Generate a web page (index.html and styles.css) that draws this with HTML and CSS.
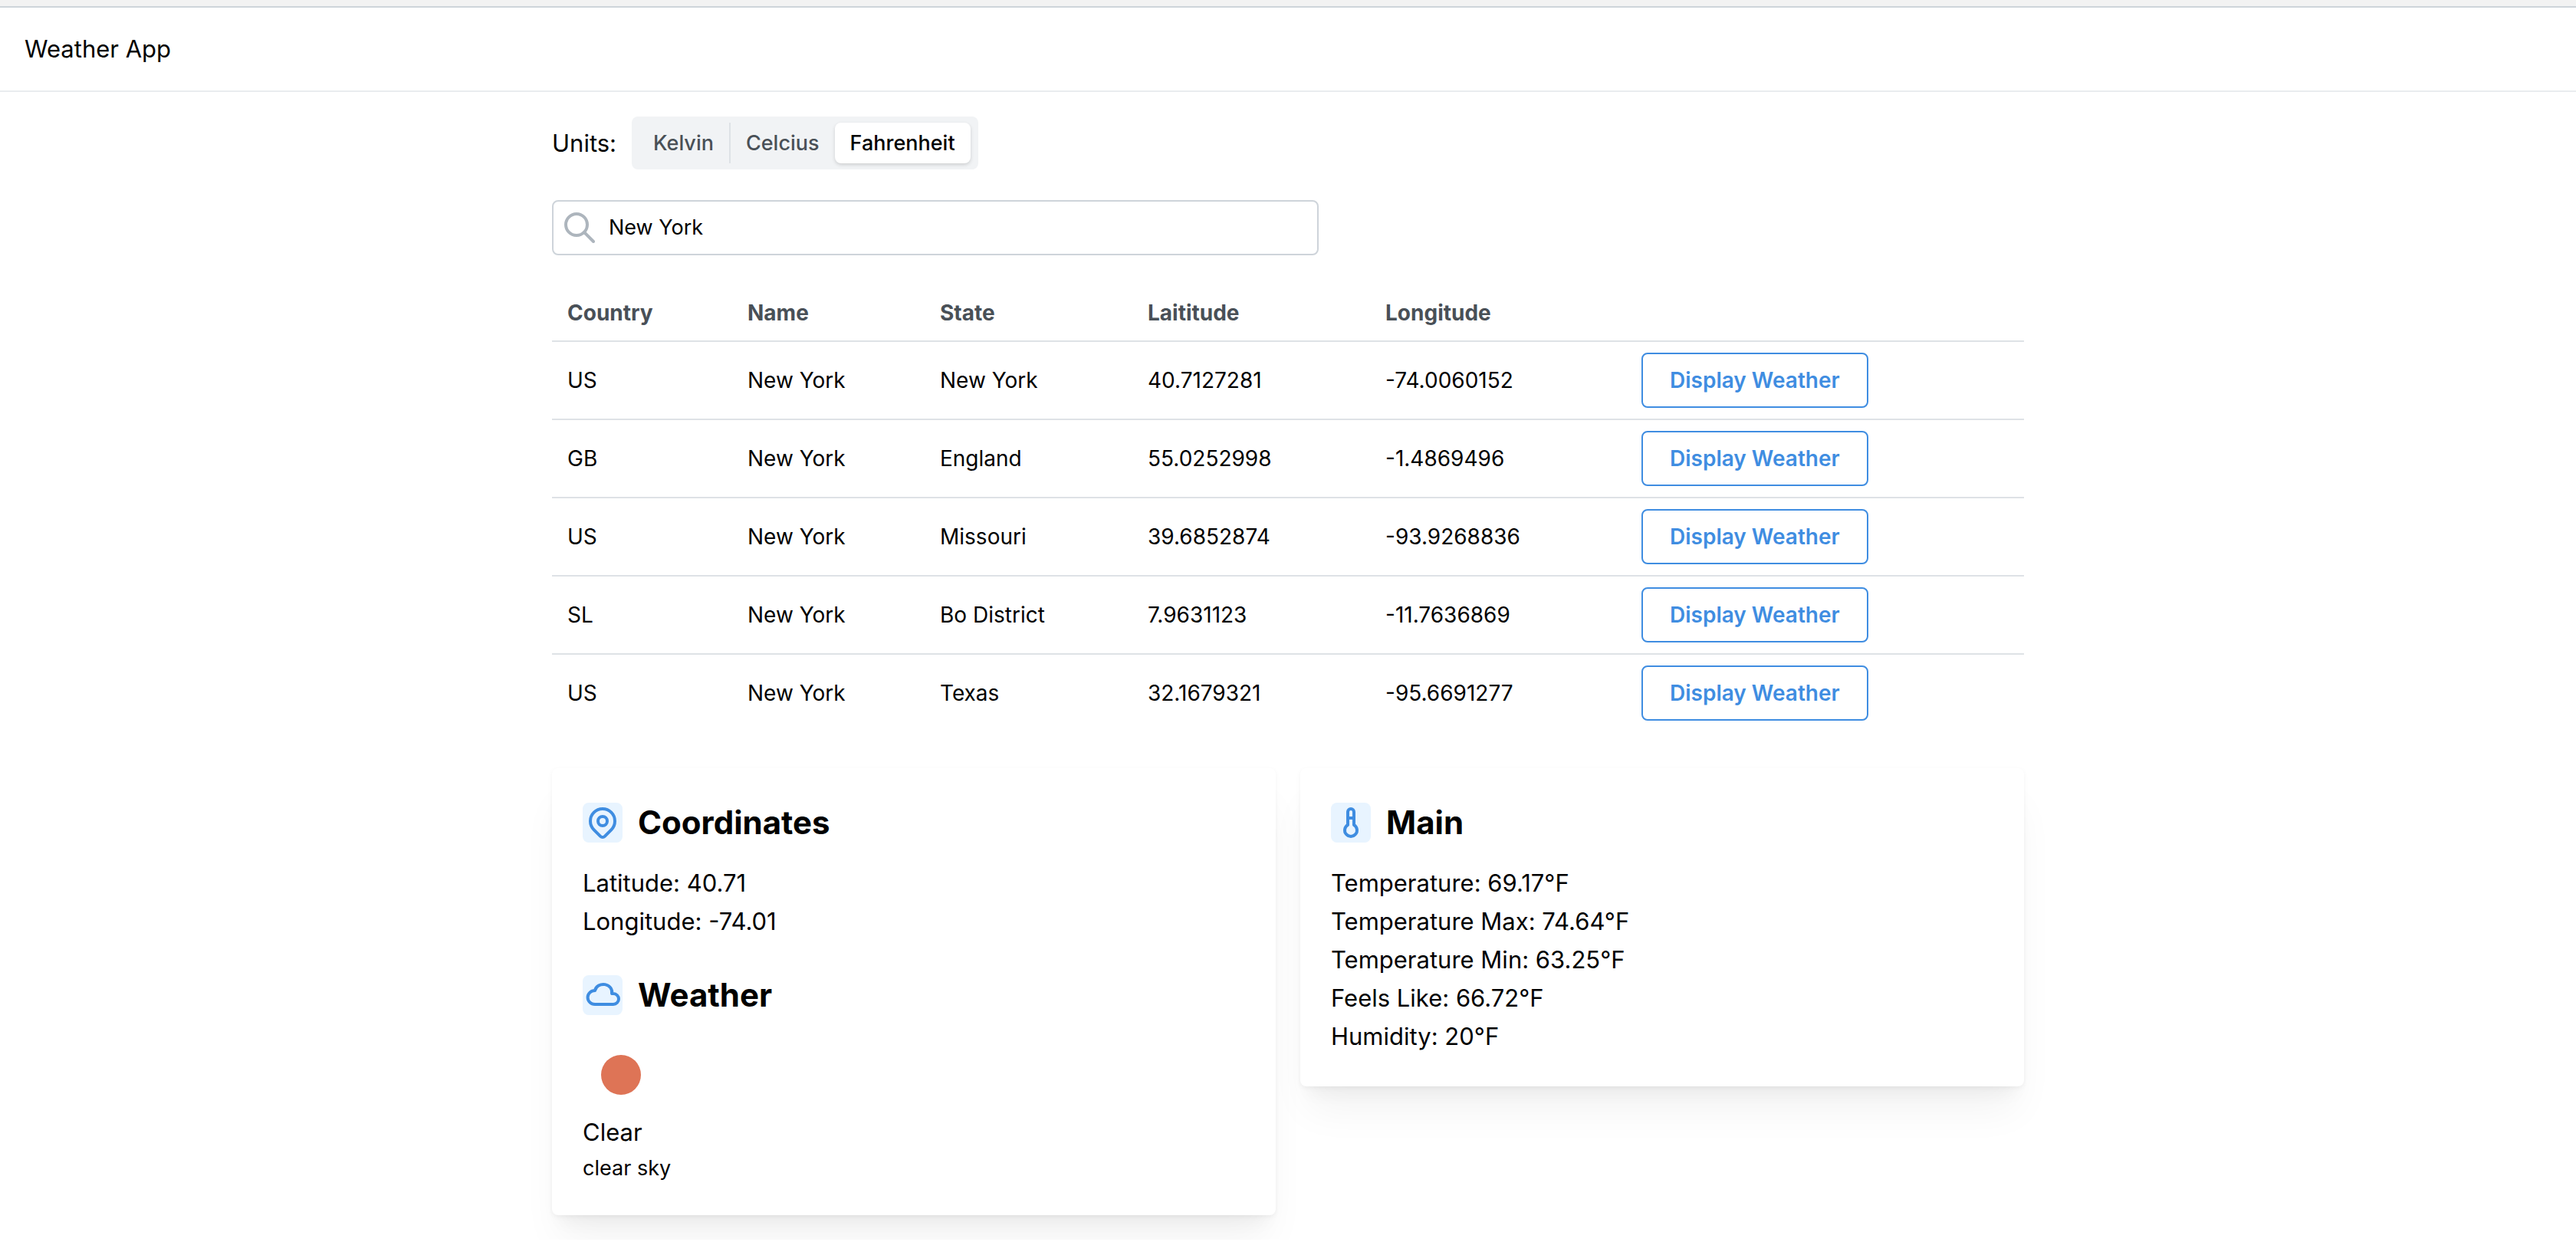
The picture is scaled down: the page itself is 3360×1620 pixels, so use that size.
FILE: index.html
```html
<!DOCTYPE html>
<html lang="en">
<head>
  <meta charset="utf-8">
  <meta name="viewport" content="width=device-width, initial-scale=1">
  <title>Weather App</title>
  <link rel="stylesheet" href="styles.css">
</head>
<body>
  <header class="header">Weather App</header>

  <main class="container">
    <fieldset class="units">
      <legend class="visually-hidden">Units</legend>
      <span>Units:</span>
      <div class="segmented">
        <div class="segment">
          <input class="segment-input" type="radio" name="units" id="kelvin">
          <label class="segment-label" for="kelvin">Kelvin</label>
        </div>
        <div class="segment">
          <input class="segment-input" type="radio" name="units" id="celcius">
          <label class="segment-label" for="celcius">Celcius</label>
        </div>
        <div class="segment">
          <input class="segment-input" type="radio" name="units" id="fahrenheit" checked>
          <label class="segment-label" for="fahrenheit">Fahrenheit</label>
        </div>
      </div>
    </fieldset>

    <div class="search">
      <svg class="search-icon" viewBox="0 0 40 40" aria-hidden="true">
        <circle cx="16" cy="16" r="14"/>
        <path d="M26 26l12 12"/>
      </svg>
      <input class="search-input" type="text" value="New York" aria-label="City">
    </div>

    <table class="table">
      <colgroup>
        <col class="col-country">
        <col class="col-name">
        <col class="col-state">
        <col class="col-latitude">
        <col class="col-longitude">
        <col>
      </colgroup>
      <thead>
        <tr><th>Country</th><th>Name</th><th>State</th><th>Laititude</th><th>Longitude</th><th></th></tr>
      </thead>
      <tbody>
        <tr><td>US</td><td>New York</td><td>New York</td><td>40.7127281</td><td>-74.0060152</td><td><button class="button" type="button">Display Weather</button></td></tr>
        <tr><td>GB</td><td>New York</td><td>England</td><td>55.0252998</td><td>-1.4869496</td><td><button class="button" type="button">Display Weather</button></td></tr>
        <tr><td>US</td><td>New York</td><td>Missouri</td><td>39.6852874</td><td>-93.9268836</td><td><button class="button" type="button">Display Weather</button></td></tr>
        <tr><td>SL</td><td>New York</td><td>Bo District</td><td>7.9631123</td><td>-11.7636869</td><td><button class="button" type="button">Display Weather</button></td></tr>
        <tr><td>US</td><td>New York</td><td>Texas</td><td>32.1679321</td><td>-95.6691277</td><td><button class="button" type="button">Display Weather</button></td></tr>
      </tbody>
    </table>

    <div class="cards">
      <section class="card">
        <div class="block">
          <h2 class="title">
            <span class="theme-icon">
              <svg viewBox="0 0 24 24" aria-hidden="true">
                <circle cx="12" cy="11" r="3"/>
                <path d="M17.657 16.657L13.414 20.9a2 2 0 0 1-2.827 0l-4.244-4.243a8 8 0 1 1 11.314 0z"/>
              </svg>
            </span>
            Coordinates
          </h2>
          <p class="line">Latitude: 40.71</p>
          <p class="line">Longitude: -74.01</p>
        </div>
        <div class="block">
          <h2 class="title">
            <span class="theme-icon">
              <svg viewBox="0 0 24 24" aria-hidden="true">
                <path d="M7 18a4.600 4.400 0 0 1 0-9 5 4.500 0 0 1 11 2h1a3.500 3.500 0 0 1 0 7H7"/>
              </svg>
            </span>
            Weather
          </h2>
          <svg class="condition" viewBox="0 0 100 100" role="img" aria-label="Clear">
            <circle cx="50" cy="50" r="26"/>
          </svg>
          <p class="line">Clear</p>
          <p class="line-small">clear sky</p>
        </div>
      </section>

      <section class="card">
        <div class="block">
          <h2 class="title">
            <span class="theme-icon">
              <svg viewBox="0 0 24 24" aria-hidden="true">
                <path d="M10 13.500a4 4 0 1 0 4 0V5a2 2 0 0 0-4 0v8.500"/>
                <path d="M10 9h4"/>
              </svg>
            </span>
            Main
          </h2>
          <p class="line">Temperature: 69.17°F</p>
          <p class="line">Temperature Max: 74.64°F</p>
          <p class="line">Temperature Min: 63.25°F</p>
          <p class="line">Feels Like: 66.72°F</p>
          <p class="line">Humidity: 20°F</p>
        </div>
      </section>
    </div>
  </main>
</body>
</html>
```

FILE: styles.css
```css
:root {
  --blue: #3f8de1;
  --blue-light: #e8f4ff;
  --gray-1: #f1f3f5;
  --gray-3: #dee2e6;
  --gray-4: #ced4da;
  --gray-5: #adb5bd;
  --gray-7: #495057;
}

* {
  box-sizing: border-box;
}

body {
  margin: 0;
  border-top: 8px solid #f2f2f2;
  background: #fff;
  color: #000;
  font-family: Inter, "Liberation Sans", sans-serif;
  font-size: 31px;
  line-height: 50px;
}

.visually-hidden,
.segment-input {
  position: absolute;
  width: 1px;
  height: 1px;
  margin: 0;
  overflow: hidden;
  opacity: 0;
}

.header {
  padding: 29px 32px;
  border-top: 2px solid var(--gray-4);
  border-bottom: 2px solid #e9ecef;
}

.container {
  max-width: 1920px;
  margin: 0 auto;
  padding: 32px 0;
}

/* Unit switch */

.units {
  display: flex;
  align-items: center;
  gap: 20px;
  margin: 0 0 40px;
  padding: 0;
  border: 0;
}

.segmented {
  display: flex;
  padding: 8px 10px 8px 8px;
  border-radius: 8px;
  background: var(--gray-1);
}

.segment {
  position: relative;
}

.segment:nth-child(2) {
  border-left: 2px solid var(--gray-3);
}

.segment-label {
  display: block;
  padding: 0 20px;
  border-radius: 8px;
  color: var(--gray-7);
  font-size: 27px;
  font-weight: 500;
  line-height: 53px;
  cursor: pointer;
}

.segment-input:checked + .segment-label {
  background: #fff;
  color: #000;
  box-shadow: 0 2px 6px rgba(0, 0, 0, .05), 0 2px 4px rgba(0, 0, 0, .1);
}

/* Search */

.search {
  display: flex;
  align-items: center;
  gap: 18px;
  width: 1000px;
  max-width: 100%;
  height: 72px;
  margin-bottom: 40px;
  padding: 0 14px;
  border: 2px solid var(--gray-4);
  border-radius: 8px;
}

.search-icon {
  flex: none;
  width: 40px;
  height: 40px;
  fill: none;
  stroke: var(--gray-5);
  stroke-width: 4;
  stroke-linecap: round;
}

.search-input {
  flex: 1;
  min-width: 0;
  padding: 0;
  border: 0;
  outline: 0;
  background: none;
  color: #000;
  font: inherit;
  font-size: 27px;
}

/* Results */

.table {
  width: 100%;
  table-layout: fixed;
  border-collapse: separate;
  border-spacing: 0;
  margin-bottom: 48px;
  font-size: 28px;
  line-height: 43px;
}

.col-country { width: 235px; }
.col-name { width: 251px; }
.col-state { width: 271px; }
.col-latitude { width: 310px; }
.col-longitude { width: 334px; }

.table th,
.table td {
  padding: 14px 20px;
  border-bottom: 2px solid var(--gray-3);
  text-align: left;
  vertical-align: middle;
}

.table th {
  color: var(--gray-7);
  font-weight: 700;
}

.table tbody tr:last-child td {
  border-bottom: 0;
}

.button {
  display: block;
  height: 72px;
  padding: 0 35px;
  border: 2px solid var(--blue);
  border-radius: 8px;
  background: #fff;
  color: var(--blue);
  font: inherit;
  font-weight: 600;
  white-space: nowrap;
  cursor: pointer;
}

/* Weather cards */

.cards {
  display: grid;
  grid-template-columns: 1fr 1fr;
  align-items: start;
  gap: 32px;
}

.card {
  display: grid;
  gap: 40px;
  padding: 40px;
  border-radius: 8px;
  background: #fff;
  box-shadow:
    0 2px 6px rgba(0, 0, 0, .05),
    0 40px 50px -10px rgba(0, 0, 0, .05),
    0 20px 20px -10px rgba(0, 0, 0, .04);
}

.title {
  display: flex;
  align-items: center;
  gap: 20px;
  margin: 0 0 24px;
  font-size: 42px;
  font-weight: 700;
  line-height: 61px;
}

.theme-icon {
  display: grid;
  place-items: center;
  width: 52px;
  height: 52px;
  border-radius: 8px;
  background: var(--blue-light);
}

.theme-icon svg {
  width: 48px;
  height: 48px;
  fill: none;
  stroke: var(--blue);
  stroke-width: 2;
  stroke-linecap: round;
  stroke-linejoin: round;
}

.condition {
  display: block;
  width: 100px;
  height: 100px;
  fill: #de7456;
}

.line,
.line-small {
  margin: 0;
}

.line-small {
  font-size: 27px;
  line-height: 43px;
}
```
